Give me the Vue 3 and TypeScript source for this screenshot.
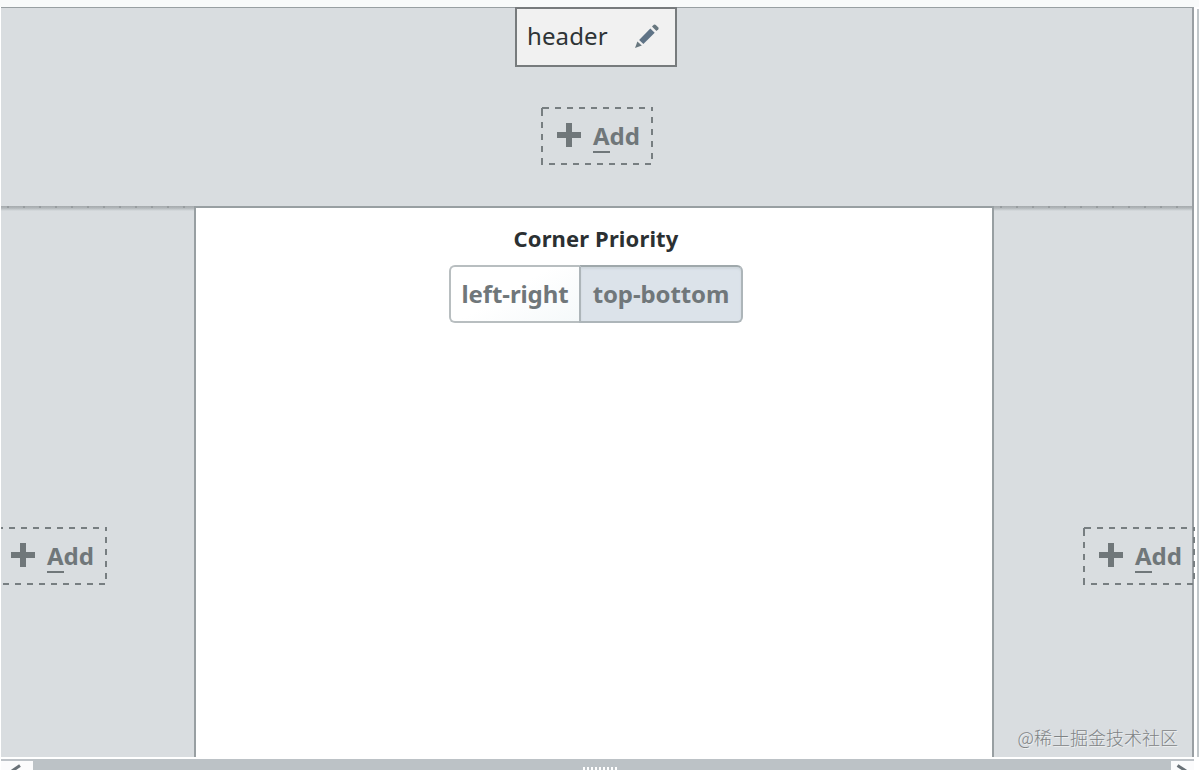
<template>
  <div class="page">
    <div class="workspace">
      <!-- Top area -->
      <header class="area-top">
        <div class="title-box">
          <span class="title-text">{{ title }}</span>
          <svg class="pencil" viewBox="0 0 24 24">
            <path d="M0 24 L2.4 17.4 L6.8 21.6 Z" fill="#68777f" />
            <path d="M4.1 15.9 L15.3 4.4 L19.7 8.7 L8.4 20.1 Z" fill="#5f7386" />
            <path d="M17 2.6 L18.8 0.8 Q19.8 0 20.8 0.9 L23.3 3.4 Q24 4.3 23.3 5.2 L21.4 7 Z" fill="#68777f" />
          </svg>
        </div>
        <button class="add-button">
          <svg class="dashes" viewBox="0 0 112 58">
            <path v-for="edge in edges" :key="edge.d" :d="edge.d" :stroke-dasharray="edge.dash" />
          </svg>
          <span class="plus" />
          <span class="add-label"><span class="accel">A</span>dd</span>
        </button>
      </header>

      <div class="row">
        <aside class="area-side left">
          <button class="add-button">
            <svg class="dashes" viewBox="0 0 112 58">
              <path v-for="edge in edges" :key="edge.d" :d="edge.d" :stroke-dasharray="edge.dash" />
            </svg>
            <span class="plus" />
            <span class="add-label"><span class="accel">A</span>dd</span>
          </button>
        </aside>

        <main class="center">
          <div class="corner-title">Corner Priority</div>
          <div class="toggle-group">
            <button
              v-for="option in options"
              :key="option"
              class="toggle"
              :class="{ active: option === priority }"
              @click="priority = option"
            >
              {{ option }}
            </button>
          </div>
        </main>

        <aside class="area-side right">
          <button class="add-button">
            <svg class="dashes" viewBox="0 0 112 58">
              <path v-for="edge in edges" :key="edge.d" :d="edge.d" :stroke-dasharray="edge.dash" />
            </svg>
            <span class="plus" />
            <span class="add-label"><span class="accel">A</span>dd</span>
          </button>
        </aside>
      </div>
    </div>

    <!-- Horizontal scrollbar -->
    <div class="scrollbar">
      <div class="arrow">
        <svg viewBox="0 0 32 9"><path d="M11 10 L19 4.5" /></svg>
      </div>
      <div class="thumb">
        <span v-for="n in 9" :key="n" class="grip" />
      </div>
      <div class="arrow end">
        <svg viewBox="0 0 23 9"><path d="M6.5 4.5 L15 10" /></svg>
      </div>
    </div>

    <div class="edge-line" />
    <div class="watermark">@稀土掘金技术社区</div>
  </div>
</template>

<script setup lang="ts">
import { ref } from 'vue';

type Priority = 'left-right' | 'top-bottom';

interface Edge {
  d: string;
  dash: string;
}

const title = 'header';
const options: Priority[] = ['left-right', 'top-bottom'];
const priority = ref<Priority>('top-bottom');

// Each side of the dashed frame starts its pattern at a different phase
const edges: Edge[] = [
  { d: 'M1 1 H112', dash: '7 6 6 6 6 6 6 6 6 6 6 6 6 6 6 6 6 6 6 6' },
  { d: 'M111 0 V58', dash: '4 6 6 6 6 6 6 6 6 6' },
  { d: 'M0 57 H112', dash: '2 6 6 6 6 6 6 6 6 6 6 6 6 6 6 6 6 6 6 6' },
  { d: 'M1 1 V58', dash: '8 6 6 6 6 6 6 6 6 6' },
];
</script>

<style>
body {
  overflow: hidden;
  background: #fff;
}
</style>

<style scoped>
.page {
  position: relative;
  width: 1199px;
  height: 770px;
  box-sizing: border-box;
  padding: 7px 0 0 1px;
  overflow: hidden;
  background: linear-gradient(#f8fafa 0 7px, #fff 7px);
  font-family: "Noto Sans", "Noto Sans CJK SC", sans-serif;
}

.workspace {
  display: flex;
  flex-direction: column;
  width: 1193px;
  height: 750px;
  box-sizing: border-box;
  border-top: 1px solid #989fa2;
  border-right: 2px solid #999fa3;
  background: #d9dde0;
}

.area-top {
  display: flex;
  flex-direction: column;
  align-items: center;
  height: 198px;
}

.title-box {
  display: flex;
  align-items: center;
  justify-content: space-between;
  width: 162px;
  height: 60px;
  margin-top: -1px;
  margin-left: -1px;
  padding: 0 16px 2px 10px;
  box-sizing: border-box;
  border: 2px solid #777b7d;
  background: #f1f1f1;
}

.title-text {
  color: #2e3436;
  font-size: 24px;
  line-height: 32px;
  letter-spacing: 0.1px;
}

.pencil {
  width: 24px;
  height: 24px;
}

.add-button {
  position: relative;
  display: flex;
  flex-shrink: 0;
  align-items: center;
  width: 112px;
  height: 58px;
  padding: 0 0 0 16px;
  border: none;
  background: transparent;
  color: #70777a;
  font-family: inherit;
  font-size: 24px;
  font-weight: 700;
}

.area-top .add-button {
  margin-top: 40px;
  margin-left: 1px;
}

.dashes {
  position: absolute;
  inset: 0;
  width: 112px;
  height: 58px;
  fill: none;
  stroke: #777e81;
  stroke-width: 2;
}

.plus {
  width: 24px;
  height: 24px;
  margin-top: -3px;
  background:
    linear-gradient(#70777a, #70777a) center / 24px 6px no-repeat,
    linear-gradient(#70777a, #70777a) center / 6px 24px no-repeat;
}

.add-label {
  height: 32px;
  margin-left: 12px;
  line-height: 32px;
}

.accel {
  display: inline-block;
  height: 33px;
  border-bottom: 2px solid #70777a;
  box-sizing: border-box;
}

.row {
  display: flex;
  height: 551px;
}

.area-side {
  display: flex;
  width: 193px;
  box-sizing: border-box;
  padding-top: 321px;
  background:
    repeating-linear-gradient(90deg, #979c9f 0 2px, transparent 2px 16px) 6px 0 / 100% 2px no-repeat,
    linear-gradient(#a6abae 0, #b1b6b9 2px, #cbd0d3 4px, #d9dde0 5px) 0 0 / 100% 5px no-repeat;
}

.left .add-button {
  margin-left: -6px;
  clip-path: inset(0 0 0 6px);
}

.area-side.right {
  width: 198px;
  padding-left: 89px;
}

.center {
  display: flex;
  flex-direction: column;
  align-items: center;
  width: 800px;
  box-sizing: border-box;
  padding-top: 15px;
  padding-right: 2px;
  padding-left: 6px;
  border: 2px solid #989fa2;
  border-bottom: none;
  background: #fff;
}

.corner-title {
  color: #2b3032;
  font-size: 22px;
  font-weight: 700;
  line-height: 30px;
  letter-spacing: 0.13px;
}

.toggle-group {
  display: flex;
  margin-top: 12px;
}

.toggle {
  width: 130px;
  height: 58px;
  padding: 0 0 2px;
  border: 2px solid #b8bec0;
  border-right: none;
  border-radius: 6px 0 0 6px;
  background: linear-gradient(150deg, #fff 45%, #f5f9fa);
  color: #70777a;
  font-family: inherit;
  font-size: 24px;
  font-weight: 700;
  letter-spacing: -0.1px;
}

.toggle.active {
  width: 164px;
  border: 2px solid #adb5b9;
  border-top-color: #9fa8ab;
  border-radius: 0 6px 6px 0;
  background: #dce3ea;
  box-shadow: inset 0 2px 2px #ced6dc;
}

.scrollbar {
  display: flex;
  width: 1193px;
  height: 11px;
  margin-top: 2px;
  background: #bdc2c7;
}

.arrow {
  width: 32px;
  height: 9px;
  margin-top: 2px;
  background: #fbfbfc;
}

.arrow.end {
  width: 23px;
}

.arrow svg {
  display: block;
  height: 9px;
  fill: none;
  stroke: #697177;
  stroke-width: 3;
}

.thumb {
  display: flex;
  flex: 1;
  align-items: flex-end;
  justify-content: center;
  gap: 2px;
  padding-right: 5px;
  box-sizing: border-box;
  background: #bcc2c6;
}

.grip {
  width: 2px;
  height: 3px;
  background: #fff;
}

.edge-line {
  position: absolute;
  top: 9px;
  right: 0;
  width: 2px;
  height: 748px;
  background: #c1c7ca;
}

.watermark {
  position: absolute;
  right: 21px;
  bottom: 20px;
  color: #7f8385;
  font-family: "Noto Sans CJK SC", sans-serif;
  font-size: 18px;
  font-weight: 300;
  line-height: 26px;
  text-shadow: 1px 1px 0 #eceff0;
}
</style>
